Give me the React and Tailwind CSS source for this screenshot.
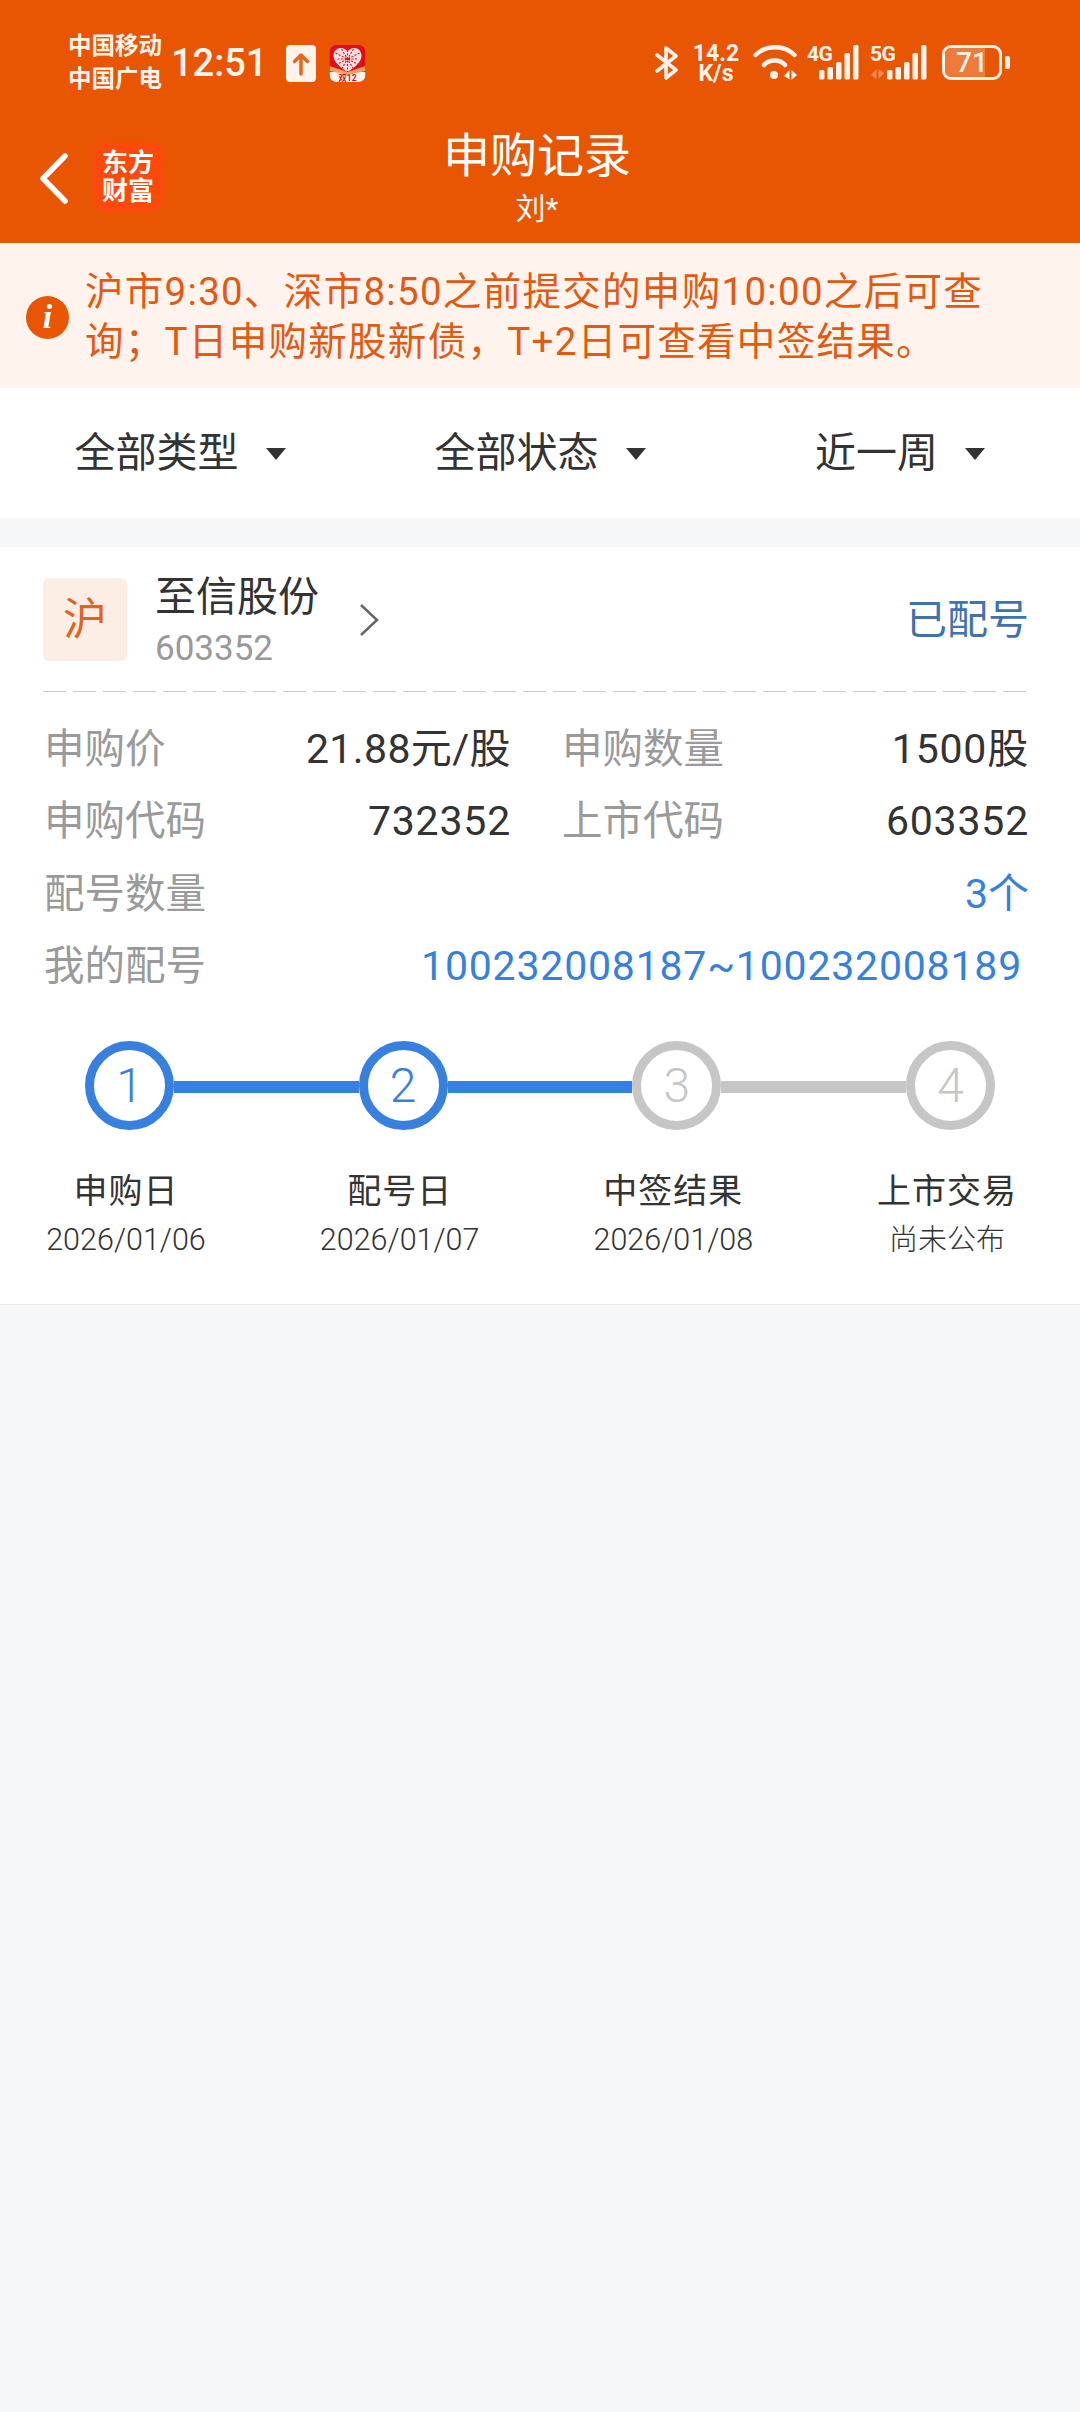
import React from 'react';

const FONT = 'font-[Roboto,"Noto_Sans_CJK_SC",sans-serif]';

function Bars({ className }) {
  return (
    <svg className={className} width="40" height="35" viewBox="0 0 40 35" fill="#fff3ec">
      <rect x="0" y="25" width="5.500" height="9.500" rx="1.500" />
      <rect x="8.500" y="22" width="5.500" height="12.500" rx="1.500" />
      <rect x="17" y="17" width="5.500" height="17.500" rx="1.500" />
      <rect x="25.500" y="8" width="5.500" height="26.500" rx="1.500" />
      <rect x="34" y="0" width="5.500" height="34.500" rx="1.500" />
    </svg>
  );
}

function StatusBar() {
  return (
    <div className="flex h-[126px] items-start pt-[30px] pr-[70px] pl-[68px] text-[#fff3ec]">
      <div className="w-[103px] text-[23.500px] leading-[33px] font-bold">
        <div>中国移动</div>
        <div>中国广电</div>
      </div>
      <div className="mt-[12px] w-[115px] text-[38px] leading-[42px] font-medium">12:51</div>
      {/* upload notification */}
      <div className="mt-[15px] flex h-[37px] w-[30px] items-center justify-center rounded-[4px] bg-[#fff3ec]">
        <svg width="18" height="24" viewBox="0 0 18 24" fill="none" stroke="#e8661c" strokeWidth="3.500" strokeLinecap="round" strokeLinejoin="round">
          <path d="M9 22V3M2.500 9.500 9 3l6.500 6.500" />
        </svg>
      </div>
      {/* pinduoduo badge */}
      <svg className="mt-[15px] ml-[13px]" width="37" height="37" viewBox="0 0 36 37">
        <defs>
          <clipPath id="pdd">
            <rect width="36" height="37" rx="7" />
          </clipPath>
        </defs>
        <g clipPath="url(#pdd)">
          <rect width="36" height="37" fill="#df0f15" />
          <rect y="27" width="36" height="10" fill="#fff6f0" />
          <path d="M0 21 18 27 36 21V26L18 30 0 26Z" fill="#f2a25a" />
          <path d="M18 27C10 22 4 17 4 10.500 4 6 7.500 3 11 3 14 3 16.500 4.500 18 6.500 19.500 4.500 22 3 25 3 28.500 3 32 6 32 10.500 32 17 26 22 18 27Z" fill="#f6dfe2" />
          <path d="M6 8 30 20M30 8 6 20M18 5V27M8 14H28M12 4 24 24M24 4 12 24" stroke="#df0f15" strokeWidth="1.100" strokeDasharray="2 1.500" />
          <text x="18" y="35.500" textAnchor="middle" fontSize="8.500" fontWeight="700" fill="#d3101a" fontFamily="Roboto, 'Noto Sans CJK SC', sans-serif">双12</text>
        </g>
      </svg>

      <div className="ml-auto flex items-start">
        {/* bluetooth */}
        <svg className="mt-[15px]" width="24" height="36" viewBox="0 0 24 36" fill="none" stroke="#fff3ec" strokeWidth="3.600" strokeLinecap="round" strokeLinejoin="round">
          <path d="M2 10 21 25 11 33V3L21 11 2 26" />
        </svg>
        <div className="mt-[14px] ml-[13px] flex w-[48px] flex-col items-center text-[23px] leading-[20px] font-bold">
          <span>14.2</span>
          <span>K/s</span>
        </div>
        {/* wifi */}
        <svg className="mt-[15px] ml-[13px]" width="44" height="36" viewBox="0 0 44 36" fill="none" stroke="#fff3ec" strokeLinecap="round">
          <path d="M2.500 10C13 -0.500 31 -0.500 41.500 10" strokeWidth="4.500" />
          <path d="M11 20C16 14 27 14 32 20" strokeWidth="4.500" />
          <circle cx="21" cy="30" r="4" fill="#fff3ec" stroke="none" />
          <path d="M36.500 25V34.500L31 31ZM38.500 25V35L44 30Z" fill="#fff3ec" stroke="none" />
        </svg>
        <div className="relative mt-[15px] ml-[10px] h-[35px] w-[52px]">
          <span className="absolute top-[-1px] left-0 text-[21px] leading-[20px] font-bold tracking-[-0.5px]">4G</span>
          <Bars className="absolute right-0 bottom-0" />
        </div>
        <div className="relative mt-[15px] ml-[11px] h-[35px] w-[57px]">
          <span className="absolute top-[-1px] left-0 text-[21px] leading-[20px] font-bold tracking-[-0.5px]">5G</span>
          <Bars className="absolute right-0 bottom-0" />
          <svg className="absolute bottom-0 left-0" width="16" height="12" viewBox="0 0 16 12" fill="#f58a52">
            <path d="M6.500 1V11L1 7ZM8.500 1V11L14 5Z" />
          </svg>
        </div>
        {/* battery */}
        <div className="mt-[15px] ml-[15px] flex items-center">
          <div className="relative h-[35px] w-[60px] overflow-hidden rounded-[9px] border-[3px] border-[#fff3ec]">
            <div className="h-full w-[40px] bg-[#ee7a3c]" />
            <span className="absolute inset-0 flex items-center justify-center text-[28px] leading-none font-medium">71</span>
          </div>
          <div className="ml-[3px] h-[13px] w-[5px] rounded-[2px] bg-[#fff3ec]" />
        </div>
      </div>
    </div>
  );
}

function NavBar() {
  return (
    <div className="relative h-[117px] text-white">
      <div className="flex h-full items-start pt-[16px] pl-[40px]">
        <svg className="mt-[11px]" width="28" height="52" viewBox="0 0 28 52" fill="none" stroke="white" strokeWidth="5.500" strokeLinecap="round" strokeLinejoin="round">
          <path d="M25 3 3 25.500 25 48" />
        </svg>
        <div className="ml-[25px] flex h-[70px] w-[70px] flex-col items-center justify-center rounded-[14px] bg-[#fc4a0c] text-[26px] leading-[28px] font-bold">
          <span>东方</span>
          <span>财富</span>
        </div>
      </div>
      <div className="absolute top-0 left-0 flex w-[1074px] flex-col items-center">
        <div className="text-[47px] leading-[60px]">申购记录</div>
        <div className="text-[30px] leading-[46px]">刘*</div>
      </div>
    </div>
  );
}

function Filter({ label }) {
  return (
    <div className="flex items-center justify-center text-[#333333]">
      <span className="text-[41px] leading-[50px]">{label}</span>
      <svg className="mt-[1px] ml-[27px]" width="20" height="12" viewBox="0 0 20 12" fill="#333333">
        <path d="M0 0H20L10 12Z" />
      </svg>
    </div>
  );
}

function Field({ label, value, valueClass = 'text-[#333333] tracking-[0.8px]' }) {
  return (
    <div className="flex h-[72.5px] items-center justify-between">
      <span className="text-[40.500px] text-[#9a9a9a]">{label}</span>
      <span className={`text-[41px] ${valueClass}`}>{value}</span>
    </div>
  );
}

function Step({ n, on }) {
  return (
    <div className={`flex h-[89px] w-[89px] shrink-0 items-center justify-center rounded-full border-[9px] text-[48px] font-light ${on ? 'border-[#3880dd] text-[#3880dd]' : 'border-[#c6c6c6] text-[#c6c6c6]'}`}>
      {n}
    </div>
  );
}

function StepLabel({ title, sub, subClass = 'text-[30.500px]' }) {
  return (
    <div className="flex w-[200px] flex-col items-center text-[#333333]">
      <span className="text-[34px] leading-[46px] tracking-[1px]">{title}</span>
      <span className={`mt-[4px] leading-[44px] font-light ${subClass}`}>{sub}</span>
    </div>
  );
}

export default function App() {
  return (
    <div className={`flex min-h-[2412px] w-[1080px] flex-col bg-[#f6f7f9] ${FONT}`}>
      <div className="h-[243px] bg-[#e85604]">
        <StatusBar />
        <NavBar />
      </div>

      <div className="flex h-[145px] items-center bg-[#fff3ee] pl-[26px]">
        <div className="mt-[3px] flex h-[43px] w-[43px] shrink-0 items-center justify-center rounded-full bg-[#e85604] font-['Liberation_Serif',serif] text-[34px] leading-none font-bold text-white italic">
          i
        </div>
        <div className="ml-[16px] pt-[2px] text-[38.500px] leading-[50px] tracking-[1.3px] text-[#e25a12]">
          沪市9:30、深市8:50之前提交的申购10:00之后可查
          <br />
          询；T日申购新股新债，T+2日可查看中签结果。
        </div>
      </div>

      <div className="grid h-[130px] grid-cols-3 items-center bg-white">
        <Filter label="全部类型" />
        <Filter label="全部状态" />
        <Filter label="近一周" />
      </div>

      <div className="mt-[29px] h-[758px] border-b border-[#ebebeb] bg-white pt-[31px]">
        <div className="flex h-[83px] pr-[51px] pl-[43px]">
          <div className="flex w-[84px] items-center justify-center rounded-[6px] bg-[#fdeee5] text-[44px] text-[#e0641e]">沪</div>
          <div className="ml-[28px] flex flex-col">
            <span className="mt-[-6px] text-[41px] leading-[50px] text-[#333333]">至信股份</span>
            <span className="mt-[5px] text-[35px] leading-[44px] text-[#999999]">603352</span>
          </div>
          <svg className="mt-[25px] ml-[40px]" width="20" height="34" viewBox="0 0 20 34" fill="none" stroke="#666666" strokeWidth="2.500">
            <path d="M2 2 18 17 2 32" />
          </svg>
          <span className="mt-[17px] ml-auto text-[41px] leading-[50px] text-[#3f72ae]">已配号</span>
        </div>

        <div className="mt-[30px] mr-[51px] ml-[43px] h-px bg-[repeating-linear-gradient(90deg,#cccccc_0_23px,transparent_23px_30px)]" />

        <div className="mt-[21px] pr-[51px] pl-[44px]">
          <div className="grid grid-cols-2 gap-x-[51px]">
            <Field label="申购价" value="21.88元/股" valueClass="text-[#333333] tracking-[0.4px]" />
            <Field label="申购数量" value="1500股" />
            <Field label="申购代码" value="732352" />
            <Field label="上市代码" value="603352" />
          </div>
          <Field label="配号数量" value="3个" valueClass="text-[#3880dd]" />
          <Field
            label="我的配号"
            value={<span className="pr-[7px]">100232008187~100232008189</span>}
            valueClass="text-[#3880dd] tracking-[0.8px]"
          />
        </div>

        <div className="mt-[38px] flex items-center pr-[85px] pl-[85px]">
          <Step n="1" on />
          <div className="mt-[2px] h-[12px] flex-1 bg-[#3880dd]" />
          <Step n="2" on />
          <div className="mt-[2px] h-[12px] flex-1 bg-[#3880dd]" />
          <Step n="3" />
          <div className="mt-[2px] h-[12px] flex-1 bg-[#c6c6c6]" />
          <Step n="4" />
        </div>

        <div className="mt-[38px] flex justify-between pr-[33px] pl-[26px]">
          <StepLabel title="申购日" sub="2026/01/06" />
          <StepLabel title="配号日" sub="2026/01/07" />
          <StepLabel title="中签结果" sub="2026/01/08" />
          <StepLabel title="上市交易" sub="尚未公布" subClass="text-[29px]" />
        </div>
      </div>
    </div>
  );
}
